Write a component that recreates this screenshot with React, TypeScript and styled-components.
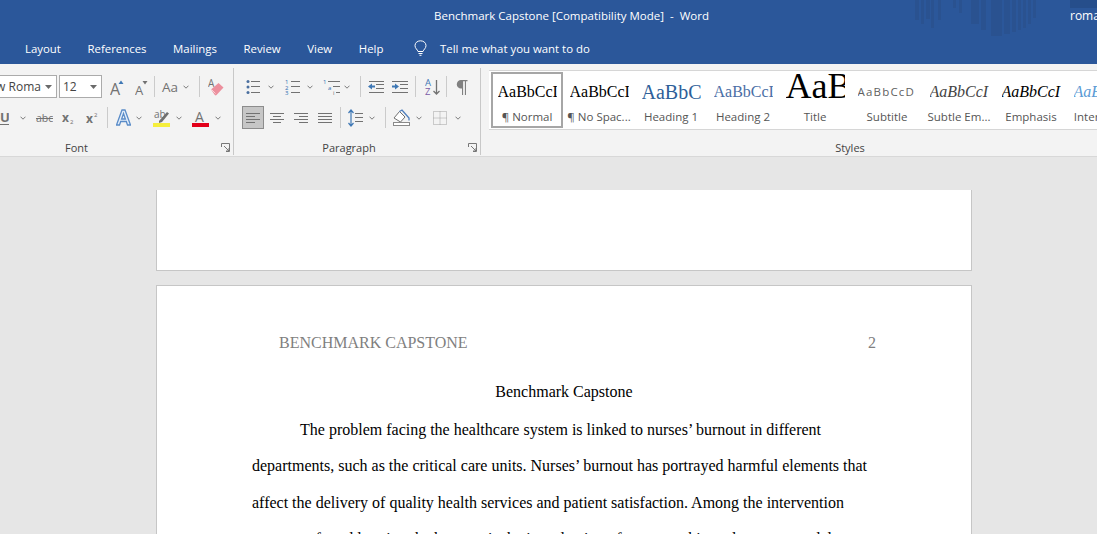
import React from 'react';
import styled, { createGlobalStyle } from 'styled-components';

const GlobalStyle = createGlobalStyle`
  html, body {
    margin: 0;
    padding: 0;
    height: 100%;
    overflow: hidden;
    background: #e6e6e6;
  }
  #root {
    height: 100%;
  }
`;

const uiFont = '"Open Sans", "Noto Sans", sans-serif';
const docFont = '"Liberation Serif", serif';
const GREY = '#727272';
const BLUE = '#3f78b5';

const Window = styled.div`
  width: 1097px;
  height: 534px;
  overflow: hidden;
  display: flex;
  flex-direction: column;
  font-family: ${uiFont};
`;

const TitleBar = styled.header`
  position: relative;
  height: 32px;
  flex: none;
  display: flex;
  align-items: center;
  padding-bottom: 2px;
  box-sizing: border-box;
  background: #2b579a;
  color: #fff;
  font-size: 11.5px;
  white-space: pre;
`;

const DocTitle = styled.span`
  margin-left: 434px;
  position: relative;
`;

const Account = styled.span`
  margin-left: auto;
  width: 27px;
  overflow: hidden;
  font-size: 12px;
  position: relative;
`;

const Backdrop = styled.svg`
  position: absolute;
  left: 905px;
  top: 0;
`;

const TabBar = styled.nav`
  height: 32px;
  flex: none;
  display: flex;
  align-items: center;
  gap: 26.6px;
  padding-left: 25px;
  background: #2b579a;
  color: #fff;
  font-size: 11.4px;
`;

const TellMe = styled.span`
  display: flex;
  align-items: center;
  gap: 13px;
  margin-left: 4px;
`;

const Ribbon = styled.section`
  height: 92px;
  flex: none;
  display: flex;
  background: #f3f3f3;
  border-bottom: 1px solid #d8d8d8;
`;

const Group = styled.div<{ $left?: number; $width: number }>`
  flex: none;
  width: ${(p) => p.$width}px;
  margin-left: ${(p) => p.$left ?? 0}px;
  height: 87px;
  margin-top: 4px;
  display: flex;
  flex-direction: column;
  border-right: 1px solid #c8c8c8;
`;

const ToolRow = styled.div<{ $top: number }>`
  height: 23px;
  margin-top: ${(p) => p.$top}px;
  display: flex;
  align-items: center;
  flex: none;
`;

const GroupFoot = styled.div`
  margin-top: auto;
  height: 16px;
  display: flex;
  align-items: center;
  font-size: 11px;
  color: #444;
`;

const FootLabel = styled.span`
  flex: 1;
  text-align: center;
`;

const Launcher = styled.svg`
  flex: none;
  margin: 0 3px 0 4px;
`;

const FontField = styled.div<{ $ml: number; $width: number }>`
  flex: none;
  box-sizing: border-box;
  height: 23px;
  width: ${(p) => p.$width}px;
  margin-left: ${(p) => p.$ml}px;
  display: flex;
  align-items: center;
  justify-content: space-between;
  padding: 0 4px 0 3px;
  background: #fff;
  border: 1px solid #ababab;
  font-size: 12px;
  color: #444;
  white-space: nowrap;
`;

const CaseLabel = styled.span<{ $ml: number }>`
  flex: none;
  width: 16px;
  margin-left: ${(p) => p.$ml}px;
  font-size: 13.5px;
  color: ${GREY};
`;

const Glyph = styled.svg<{ $ml: number }>`
  flex: none;
  display: block;
  margin-left: ${(p) => p.$ml}px;
`;

const Sep = styled.span<{ $ml: number }>`
  flex: none;
  width: 1px;
  height: 21px;
  margin-left: ${(p) => p.$ml}px;
  background: #cbcbcb;
`;

const ActiveTool = styled.span<{ $ml: number }>`
  flex: none;
  box-sizing: border-box;
  width: 22px;
  height: 23px;
  margin-left: ${(p) => p.$ml}px;
  display: flex;
  align-items: center;
  justify-content: center;
  background: #c6c6c6;
  border: 1px solid #8c8c8c;
`;

const Gallery = styled.div`
  margin: 2px 0 0 8px;
  height: 58px;
  display: flex;
  padding: 0 0 0 2px;
  background: #fff;
  border-top: 1px solid #d6d6d6;
  border-bottom: 1px solid #d6d6d6;
  flex: none;
  align-items: center;
`;

const StyleCard = styled.div<{ $selected?: boolean }>`
  flex: none;
  box-sizing: border-box;
  width: 72px;
  height: 56px;
  display: flex;
  flex-direction: column;
  align-items: center;
  border: 2px solid ${(p) => (p.$selected ? '#a6a6a6' : 'transparent')};
  box-shadow: ${(p) => (p.$selected ? 'inset 0 0 0 1px #fff' : 'none')};
  background: #fff;
`;

const Preview = styled.div<{
  $font?: string;
  $size: number;
  $color: string;
  $italic?: boolean;
  $spacing?: number;
  $lift?: number;
}>`
  box-sizing: border-box;
  width: 59px;
  height: 35px;
  padding-bottom: ${(p) => p.$lift ?? 0}px;
  flex: none;
  overflow: hidden;
  display: flex;
  align-items: center;
  white-space: nowrap;
  line-height: 1;
  font-family: ${(p) => p.$font ?? docFont};
  font-size: ${(p) => p.$size}px;
  font-style: ${(p) => (p.$italic ? 'italic' : 'normal')};
  letter-spacing: ${(p) => p.$spacing ?? 0}px;
  color: ${(p) => p.$color};
`;

const StyleName = styled.div`
  font-size: 11.5px;
  line-height: 16px;
  color: #555;
  white-space: nowrap;
`;

const Canvas = styled.main`
  flex: 1;
  min-height: 0;
  display: flex;
  flex-direction: column;
  align-items: flex-start;
  gap: 14px;
  padding: 33px 0 0 156px;
  background: #e6e6e6;
`;

const Page = styled.article<{ $cut?: boolean }>`
  box-sizing: border-box;
  width: 816px;
  flex: none;
  background: #fff;
  border: 1px solid #c6c6c6;
  border-top: ${(p) => (p.$cut ? 'none' : '1px solid #c6c6c6')};
  height: ${(p) => (p.$cut ? '81px' : 'auto')};
  font-family: ${docFont};
  font-size: 16px;
  color: #000;
`;

const RunningHead = styled.div`
  display: flex;
  justify-content: space-between;
  margin: 47px 95px 0 122px;
  line-height: 20px;
  color: #7f7f7f;
`;

const Heading = styled.div`
  margin-top: 20px;
  line-height: 38.5px;
  text-align: center;
`;

const Line = styled.div<{ $indent?: boolean }>`
  line-height: 36.6px;
  margin-left: ${(p) => (p.$indent ? 143 : 95)}px;
  white-space: nowrap;
`;

const Chevron = ({ ml }: { ml: number }) => (
  <Glyph $ml={ml} width="6" height="4" viewBox="0 0 6 4">
    <path d="M.5.7 3 3.2 5.5.7" fill="none" stroke="#7a7a7a" />
  </Glyph>
);

const FieldArrow = () => (
  <svg width="7" height="4" viewBox="0 0 7 4" style={{ flex: 'none' }}>
    <path d="M0 0h7L3.5 4z" fill="#6a6a6a" />
  </svg>
);

const DialogLauncher = () => (
  <Launcher width="9" height="9" viewBox="0 0 9 9">
    <path d="M.5 4V.5h8v8H5M3 3l5 5M8 5v3H5" fill="none" stroke="#777" strokeWidth="1" />
  </Launcher>
);

const Lines = ({ rows }: { rows: [number, number, number][] }) => (
  <>
    {rows.map(([x1, x2, y]) => (
      <path key={`${x1}-${y}`} d={`M${x1} ${y}.5H${x2}`} stroke={GREY} />
    ))}
  </>
);

const AlignIcon = ({ ml, rows }: { ml: number; rows: [number, number][] }) => (
  <Glyph $ml={ml} width="14" height="12" viewBox="0 0 14 12">
    <Lines rows={rows.map(([a, b], i) => [a, b, i * 3 + 1] as [number, number, number])} />
  </Glyph>
);

const letter = { fontFamily: uiFont };

export default function App() {
  const stripes = [
    [10, 4, 20], [16, 3, 24], [21, 4, 19], [26, 3, 28], [33, 3, 20], [48, 3, 8],
    [54, 3, 13], [66, 8, 24], [76, 5, 30], [86, 11, 36], [99, 6, 34], [107, 4, 32],
    [113, 3, 30], [118, 3, 28], [123, 3, 24], [128, 3, 18],
  ];

  return (
    <Window>
      <GlobalStyle />
      <TitleBar>
        <Backdrop width="192" height="40" viewBox="0 0 192 40">
          {stripes.map(([x, w, h]) => (
            <rect key={x} x={x} width={w} height={h} fill="#2a5290" />
          ))}
          <rect x="165" width="27" height="8" fill="#264e8b" />
        </Backdrop>
        <DocTitle>Benchmark Capstone [Compatibility Mode]  -  Word</DocTitle>
        <Account>roman</Account>
      </TitleBar>

      <TabBar>
        <span>Layout</span>
        <span>References</span>
        <span>Mailings</span>
        <span>Review</span>
        <span>View</span>
        <span>Help</span>
        <TellMe>
          <svg width="13" height="16" viewBox="0 0 13 16">
            <path
              d="M4 11.5C3.5 9.5 1 8.5 1 5.6 1 2.8 3.4.8 6.5.8S12 2.8 12 5.6c0 2.9-2.5 3.9-3 5.9zM4.5 13.5h4M5.5 15.3h2"
              fill="none"
              stroke="#fff"
            />
          </svg>
          <span>Tell me what you want to do</span>
        </TellMe>
      </TabBar>

      <Ribbon>
        <Group $left={-64} $width={297}>
          <ToolRow $top={7}>
            <FontField $ml={4} $width={117}>
              <span>Times New Roma</span>
              <FieldArrow />
            </FontField>
            <FontField $ml={2} $width={43}>
              <span>12</span>
              <FieldArrow />
            </FontField>
            <Glyph $ml={8} width="14" height="18" viewBox="0 0 14 18">
              <text x="0" y="17" fontSize="16" fill={GREY} style={letter}>A</text>
              <path d="M8.5 6 11 2.5 13.5 6z" fill={BLUE} />
            </Glyph>
            <Glyph $ml={11} width="13" height="18" viewBox="0 0 13 18">
              <text x="0" y="17" fontSize="13" fill={GREY} style={letter}>A</text>
              <path d="M7.5 3 10 6.5 12.5 3z" fill={GREY} />
            </Glyph>
            <Sep $ml={6} />
            <CaseLabel $ml={7}>Aa</CaseLabel>
            <Chevron ml={5} />
            <Sep $ml={10} />
            <Glyph $ml={8} width="16" height="18" viewBox="0 0 16 18">
              <text x="0" y="9" fontSize="10" fill={GREY} style={letter}>A</text>
              <path d="M3 11.5 10.5 5l5 4.5-7 7.5a1.2 1.2 0 0 1-1.7 0z" fill="#ec8f9d" />
              <path d="M3.5 11.5 7.5 15.5" stroke="#fff" strokeWidth=".6" />
            </Glyph>
          </ToolRow>
          <ToolRow $top={8}>
            <Glyph $ml={64} width="9" height="16" viewBox="0 0 9 16">
              <text x="0" y="12" fontSize="13" fontWeight="700" fill={GREY} style={letter}>U</text>
              <path d="M0 14.5h9" stroke={GREY} />
            </Glyph>
            <Chevron ml={11} />
            <Glyph $ml={10} width="17" height="14" viewBox="0 0 17 14">
              <text x="0" y="11" fontSize="10.5" fill={GREY} style={letter}>abc</text>
              <path d="M0 7.5h17" stroke={GREY} />
            </Glyph>
            <Glyph $ml={9} width="13" height="14" viewBox="0 0 13 14">
              <text x="0" y="11" fontSize="12" fontWeight="700" fill={GREY} style={letter}>x</text>
              <text x="8" y="13" fontSize="6" fill={GREY} style={letter}>2</text>
            </Glyph>
            <Glyph $ml={11} width="13" height="14" viewBox="0 0 13 14">
              <text x="0" y="12" fontSize="12" fontWeight="700" fill={GREY} style={letter}>x</text>
              <text x="8" y="6" fontSize="6" fill={GREY} style={letter}>2</text>
            </Glyph>
            <Sep $ml={8} />
            <Glyph $ml={8} width="15" height="17" viewBox="0 0 15 17">
              <path d="M6 1h3l5.5 15h-3l-1.2-3.5H4.700L3.5 16h-3zM5.6 10h3.800L7.500 4.500z" fill="#e4eefa" stroke="#5a8cc8" strokeWidth="1.3" />
            </Glyph>
            <Chevron ml={5} />
            <Glyph $ml={11} width="17" height="18" viewBox="0 0 17 18">
              <text x="1" y="9" fontSize="10" fill={GREY} style={letter}>ab</text>
              <path d="M6 12 14 3l2 1.5-7 8.5-3 1z" fill="#6f6f6f" />
              <rect y="14" width="17" height="4" fill="#f5ee3c" />
            </Glyph>
            <Chevron ml={6} />
            <Glyph $ml={10} width="17" height="18" viewBox="0 0 17 18">
              <text x="3" y="13" fontSize="14" fill={GREY} style={letter}>A</text>
              <rect y="14" width="17" height="4" fill="#e2001a" />
            </Glyph>
            <Chevron ml={6} />
          </ToolRow>
          <GroupFoot>
            <FootLabel>Font</FootLabel>
            <DialogLauncher />
          </GroupFoot>
        </Group>

        <Group $width={246}>
          <ToolRow $top={7}>
            <Glyph $ml={12} width="14" height="16" viewBox="0 0 14 16">
              <circle cx="2" cy="2.5" r="1.5" fill="#4a6f9f" />
              <circle cx="2" cy="8" r="1.5" fill="#4a6f9f" />
              <circle cx="2" cy="13.5" r="1.5" fill="#4a6f9f" />
              <Lines rows={[[5, 14, 2], [5, 14, 7], [5, 14, 13]]} />
            </Glyph>
            <Chevron ml={8} />
            <Glyph $ml={11} width="15" height="16" viewBox="0 0 15 16">
              <text x="0" y="5" fontSize="6" fill="#2f6fb0" style={letter}>1</text>
              <text x="0" y="10.5" fontSize="6" fill="#2f6fb0" style={letter}>2</text>
              <text x="0" y="16" fontSize="6" fill="#2f6fb0" style={letter}>3</text>
              <Lines rows={[[6, 15, 2], [6, 15, 7], [6, 15, 13]]} />
            </Glyph>
            <Chevron ml={7} />
            <Glyph $ml={10} width="17" height="16" viewBox="0 0 17 16">
              <text x="0" y="5" fontSize="6" fill="#2f6fb0" style={letter}>1</text>
              <text x="5" y="10.5" fontSize="6" fill="#2f6fb0" style={letter}>a</text>
              <text x="10" y="16" fontSize="6" fill={GREY} style={letter}>i</text>
              <Lines rows={[[5, 17, 2], [10, 17, 7], [13, 17, 13]]} />
            </Glyph>
            <Chevron ml={4} />
            <Sep $ml={10} />
            <Glyph $ml={7} width="16" height="14" viewBox="0 0 16 14">
              <Lines rows={[[1, 16, 1], [8, 16, 4], [8, 16, 8], [1, 16, 12]]} />
              <path d="M0 6.5 4 3.5v2h3v2H4v2z" fill={BLUE} />
            </Glyph>
            <Glyph $ml={8} width="16" height="14" viewBox="0 0 16 14">
              <Lines rows={[[0, 16, 1], [8, 16, 4], [8, 16, 8], [0, 16, 12]]} />
              <path d="M7 6.5 3 3.5v2H0v2h3v2z" fill={BLUE} />
            </Glyph>
            <Sep $ml={7} />
            <Glyph $ml={9} width="15" height="18" viewBox="0 0 15 18">
              <text x="0" y="8" fontSize="9.5" fill="#3f78b5" style={letter}>A</text>
              <text x="0" y="17" fontSize="9.5" fill="#7a5aa6" style={letter}>Z</text>
              <path d="M11.5 2v14M8.5 13l3 3 3-3" fill="none" stroke={GREY} strokeWidth="1.3" />
            </Glyph>
            <Sep $ml={6} />
            <Glyph $ml={9} width="12" height="16" viewBox="0 0 12 16">
              <path d="M5 9.5a4.2 4.2 0 0 1 0-8.500h6.500v1.200H10V16H8.900V2.200H7.100V16H6V9.500z" fill="#808080" />
            </Glyph>
          </ToolRow>
          <ToolRow $top={8}>
            <ActiveTool $ml={8}>
              <Glyph $ml={0} width="14" height="12" viewBox="0 0 14 12">
                <Lines rows={[[0, 14, 1], [0, 9, 4], [0, 14, 7], [0, 9, 10]]} />
              </Glyph>
            </ActiveTool>
            <AlignIcon ml={6} rows={[[0, 14], [3, 11], [0, 14], [3, 11]]} />
            <AlignIcon ml={10} rows={[[0, 14], [5, 14], [0, 14], [5, 14]]} />
            <AlignIcon ml={10} rows={[[0, 14], [0, 14], [0, 14], [0, 14]]} />
            <Sep $ml={8} />
            <Glyph $ml={7} width="15" height="18" viewBox="0 0 15 18">
              <path d="M3 1v16M.5 4 3 1l2.5 3M.5 14 3 17l2.5-3" fill="none" stroke={BLUE} strokeWidth="1.2" />
              <Lines rows={[[7, 15, 4], [7, 15, 8], [7, 15, 12]]} />
            </Glyph>
            <Chevron ml={6} />
            <Sep $ml={10} />
            <Glyph $ml={7} width="17" height="17" viewBox="0 0 17 17">
              <path d="M1 9 6.5 2.5 12 8l-4.500 5z" fill="#fff" stroke={GREY} />
              <path d="M6.5 2.5 9 1l3 3.500L16 9v2.500" fill="none" stroke="#4f7fbd" strokeWidth="1.3" />
              <rect x=".5" y="13.5" width="16" height="3" fill="#fff" stroke="#8a8a8a" />
            </Glyph>
            <Chevron ml={6} />
            <Glyph $ml={11} width="14" height="14" viewBox="0 0 14 14">
              <path
                d="M.5.5h13v13H.5zM.5 7h13M7 .5v13"
                fill="none"
                stroke="#a0a0a0"
                strokeDasharray="1 1"
              />
            </Glyph>
            <Chevron ml={8} />
          </ToolRow>
          <GroupFoot>
            <FootLabel>Paragraph</FootLabel>
            <DialogLauncher />
          </GroupFoot>
        </Group>

        <Group $width={738}>
          <Gallery>
            <StyleCard $selected>
              <Preview $size={16} $color="#000">AaBbCcI</Preview>
              <StyleName>¶ Normal</StyleName>
            </StyleCard>
            <StyleCard>
              <Preview $size={16} $color="#000">AaBbCcI</Preview>
              <StyleName>¶ No Spac...</StyleName>
            </StyleCard>
            <StyleCard>
              <Preview $size={20} $color="#2e5f99">AaBbC</Preview>
              <StyleName>Heading 1</StyleName>
            </StyleCard>
            <StyleCard>
              <Preview $size={16} $color="#4a6ea5">AaBbCcI</Preview>
              <StyleName>Heading 2</StyleName>
            </StyleCard>
            <StyleCard>
              <Preview $size={36} $lift={12} $color="#000">AaB</Preview>
              <StyleName>Title</StyleName>
            </StyleCard>
            <StyleCard>
              <Preview $font={uiFont} $size={11.5} $spacing={1.2} $color="#5f5f5f">AaBbCcD</Preview>
              <StyleName>Subtitle</StyleName>
            </StyleCard>
            <StyleCard>
              <Preview $size={16} $italic $color="#444">AaBbCcI</Preview>
              <StyleName>Subtle Em...</StyleName>
            </StyleCard>
            <StyleCard>
              <Preview $size={16} $italic $color="#000">AaBbCcI</Preview>
              <StyleName>Emphasis</StyleName>
            </StyleCard>
            <StyleCard>
              <Preview $size={16} $italic $color="#5b9bd5">AaBbCcI</Preview>
              <StyleName>Intense E...</StyleName>
            </StyleCard>
          </Gallery>
          <GroupFoot>
            <FootLabel>Styles</FootLabel>
          </GroupFoot>
        </Group>
      </Ribbon>

      <Canvas>
        <Page $cut />
        <Page>
          <RunningHead>
            <span>BENCHMARK CAPSTONE</span>
            <span>2</span>
          </RunningHead>
          <Heading>Benchmark Capstone</Heading>
          <Line $indent>The problem facing the healthcare system is linked to nurses’ burnout in different</Line>
          <Line>departments, such as the critical care units. Nurses’ burnout has portrayed harmful elements that</Line>
          <Line>affect the delivery of quality health services and patient satisfaction. Among the intervention</Line>
          <Line>measures for addressing the burnout is the introduction of a mentorship and support model.</Line>
        </Page>
      </Canvas>
    </Window>
  );
}
